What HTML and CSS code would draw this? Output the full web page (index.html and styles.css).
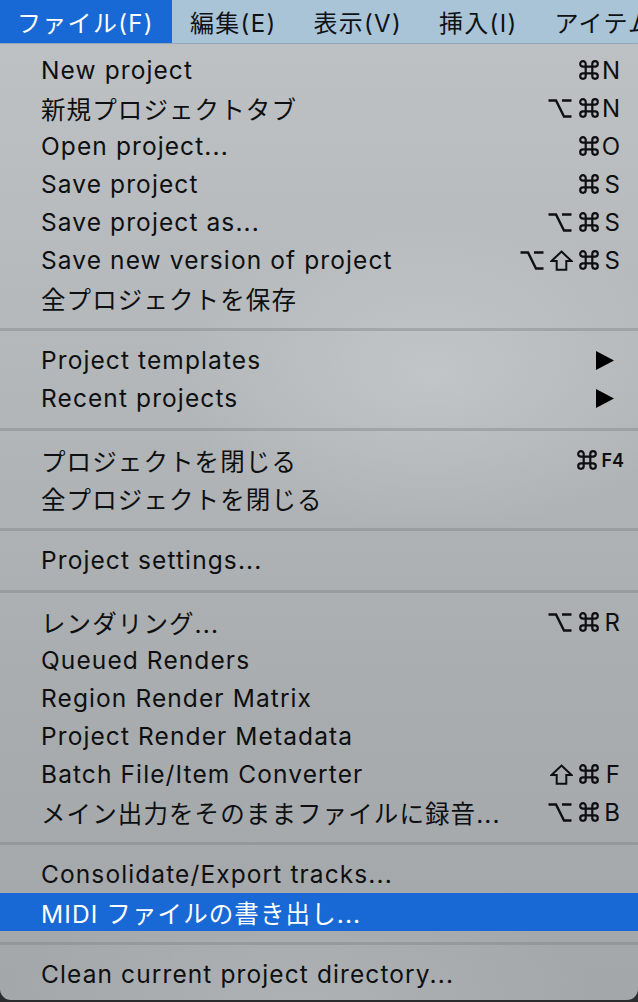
FILE: index.html
```html
<!DOCTYPE html>
<html lang="ja">
<head>
<meta charset="utf-8">
<title>Menu</title>
<link rel="stylesheet" href="styles.css">
</head>
<body>
<svg width="0" height="0" class="defs" aria-hidden="true">
  <defs>
    <symbol id="cmd" viewBox="0 0 20 20"><path d="M7,15.5 V4.5 A2.5,2.5 0 1 0 4.5,7 H15.5 A2.5,2.5 0 1 0 13,4.5 V15.5 A2.5,2.5 0 1 0 15.5,13 H4.5 A2.5,2.5 0 1 0 7,15.5 Z" fill="none" stroke="currentColor" stroke-width="2"/></symbol>
    <symbol id="opt" viewBox="0 0 24 19"><path d="M0.5,1.5 H8 L16,17.5 H23.5 M14,1.5 H23.5" fill="none" stroke="currentColor" stroke-width="2.4"/></symbol>
    <symbol id="shift" viewBox="0 0 23 21"><path d="M11.5,1.6 L21.5,11 H16.3 V19.8 H6.7 V11 H1.5 Z" fill="none" stroke="currentColor" stroke-width="2" stroke-linejoin="miter"/></symbol>
  </defs>
</svg>
<div class="screen">
  <div class="menubar">
    <div class="mb-item active">ファイル(F)</div>
    <div class="mb-item">編集(E)</div>
    <div class="mb-item">表示(V)</div>
    <div class="mb-item">挿入(I)</div>
    <div class="mb-item">アイテム(T)</div>
  </div>
  <div class="menu">
    <div class="item"><span class="label">New project</span><span class="keys"><svg class="k-cmd"><use href="#cmd"/></svg><span class="ch">N</span></span></div>
    <div class="item"><span class="label">新規プロジェクトタブ</span><span class="keys"><svg class="k-opt"><use href="#opt"/></svg><svg class="k-cmd"><use href="#cmd"/></svg><span class="ch">N</span></span></div>
    <div class="item"><span class="label">Open project...</span><span class="keys"><svg class="k-cmd"><use href="#cmd"/></svg><span class="ch">O</span></span></div>
    <div class="item"><span class="label">Save project</span><span class="keys"><svg class="k-cmd"><use href="#cmd"/></svg><span class="ch">S</span></span></div>
    <div class="item"><span class="label">Save project as...</span><span class="keys"><svg class="k-opt"><use href="#opt"/></svg><svg class="k-cmd"><use href="#cmd"/></svg><span class="ch">S</span></span></div>
    <div class="item"><span class="label">Save new version of project</span><span class="keys"><svg class="k-opt"><use href="#opt"/></svg><svg class="k-shift"><use href="#shift"/></svg><svg class="k-cmd"><use href="#cmd"/></svg><span class="ch">S</span></span></div>
    <div class="item"><span class="label">全プロジェクトを保存</span></div>
    <div class="sep"></div>
    <div class="item"><span class="label">Project templates</span><svg class="arrow" width="18" height="19" viewBox="0 0 18 19"><polygon points="0,0 18,9.5 0,19" fill="#000"/></svg></div>
    <div class="item"><span class="label">Recent projects</span><svg class="arrow" width="18" height="19" viewBox="0 0 18 19"><polygon points="0,0 18,9.5 0,19" fill="#000"/></svg></div>
    <div class="sep"></div>
    <div class="item"><span class="label">プロジェクトを閉じる</span><span class="keys keys-f4"><svg class="k-cmd"><use href="#cmd"/></svg><span class="ch small">F4</span></span></div>
    <div class="item"><span class="label">全プロジェクトを閉じる</span></div>
    <div class="sep"></div>
    <div class="item"><span class="label">Project settings...</span></div>
    <div class="sep"></div>
    <div class="item"><span class="label">レンダリング...</span><span class="keys"><svg class="k-opt"><use href="#opt"/></svg><svg class="k-cmd"><use href="#cmd"/></svg><span class="ch">R</span></span></div>
    <div class="item"><span class="label">Queued Renders</span></div>
    <div class="item"><span class="label">Region Render Matrix</span></div>
    <div class="item"><span class="label">Project Render Metadata</span></div>
    <div class="item"><span class="label">Batch File/Item Converter</span><span class="keys"><svg class="k-shift"><use href="#shift"/></svg><svg class="k-cmd"><use href="#cmd"/></svg><span class="ch">F</span></span></div>
    <div class="item"><span class="label">メイン出力をそのままファイルに録音...</span><span class="keys"><svg class="k-opt"><use href="#opt"/></svg><svg class="k-cmd"><use href="#cmd"/></svg><span class="ch">B</span></span></div>
    <div class="sep"></div>
    <div class="item"><span class="label">Consolidate/Export tracks...</span></div>
    <div class="item selected"><span class="label">MIDI ファイルの書き出し...</span></div>
    <div class="sep"></div>
    <div class="item"><span class="label">Clean current project directory...</span></div>
  </div>
</div>
</body>
</html>
```

FILE: styles.css
```css
html, body {
  margin: 0;
  padding: 0;
}
body {
  width: 638px;
  height: 1002px;
  background: #2b2c2e;
  overflow: hidden;
  font-family: Inter, "Noto Sans CJK JP", sans-serif;
  color: #0e0f10;
}
.defs {
  position: absolute;
  width: 0;
  height: 0;
}
.screen {
  width: 638px;
}
.menubar {
  height: 43px;
  background: #a9c3d7;
  border-bottom: 1px solid #93a7b6;
  display: flex;
  align-items: stretch;
  white-space: nowrap;
  overflow: hidden;
}
.mb-item {
  display: flex;
  align-items: center;
  padding: 0 19px 0 18px;
  font-size: 24px;
  letter-spacing: 1.3px;
  color: #0f1215;
}
.mb-item.active {
  background: #1868d5;
  color: #fff;
  width: 172px;
  box-sizing: border-box;
  padding-left: 17px;
}
.menu {
  padding: 7px 0 7px;
  border-radius: 0 0 11px 11px;
  background:
    radial-gradient(ellipse 260px 160px at 430px 330px, rgba(205,208,210,0.55), rgba(205,208,210,0) 100%),
    radial-gradient(ellipse 300px 120px at 300px 960px, rgba(190,194,197,0.4), rgba(190,194,197,0) 100%),
    linear-gradient(to bottom, #bdc1c4 0%, #b3b7ba 35%, #a8acaf 70%, #a3a7aa 100%);
}
.item {
  height: 38px;
  display: flex;
  align-items: center;
  justify-content: space-between;
  padding: 0 18px 0 41px;
  font-size: 24.5px;
  letter-spacing: 1.1px;
  white-space: nowrap;
}
.item.selected {
  background: #1868d5;
  color: #fff;
}
.keys {
  display: flex;
  align-items: center;
  letter-spacing: 0;
}
.k-opt {
  width: 24px;
  height: 19px;
  margin-right: 6px;
}
.k-shift {
  width: 23px;
  height: 21px;
  margin-right: 5px;
}
.k-cmd {
  width: 22px;
  height: 22px;
}
.ch {
  font-size: 24px;
  min-width: 20px;
  text-align: right;
}
.ch.small {
  font-size: 18px;
  font-weight: 600;
  min-width: 0;
  margin-left: 3px;
}
.keys-f4 {
  margin-right: -4px;
}
.arrow {
  margin-right: 6px;
}
.sep {
  height: 24px;
  display: flex;
  align-items: center;
}
.sep::before {
  content: "";
  display: block;
  width: 100%;
  height: 3px;
  background: rgba(120,124,128,0.38);
}
```
